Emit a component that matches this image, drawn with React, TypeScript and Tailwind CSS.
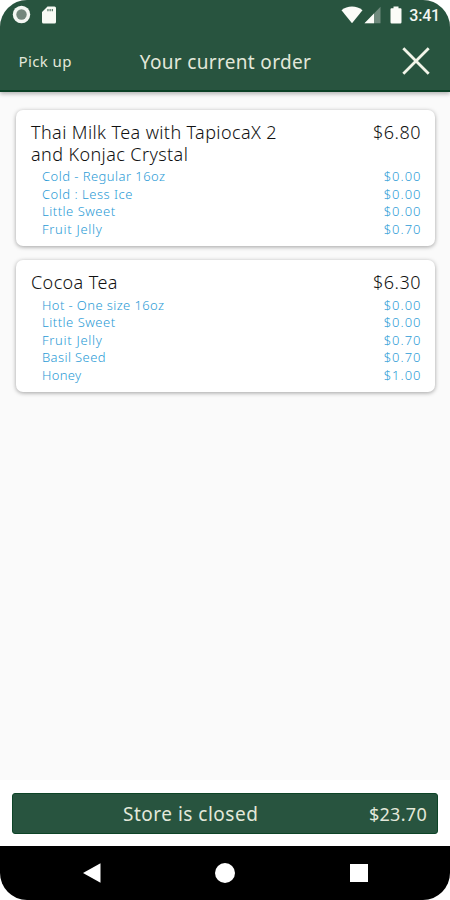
type Option = {
  name: string;
  price: string;
  nameClass: string;
};

type OrderItem = {
  title: string;
  price: string;
  options: Option[];
};

const ORDER: OrderItem[] = [
  {
    title: 'Thai Milk Tea with TapiocaX 2 and Konjac Crystal',
    price: '$6.80',
    options: [
      { name: 'Cold - Regular 16oz', price: '$0.00', nameClass: 'tracking-[0.45px]' },
      { name: 'Cold : Less Ice', price: '$0.00', nameClass: 'tracking-[0.5px]' },
      { name: 'Little Sweet', price: '$0.00', nameClass: 'tracking-[0.5px]' },
      { name: 'Fruit Jelly', price: '$0.70', nameClass: 'tracking-[0.7px]' },
    ],
  },
  {
    title: 'Cocoa Tea',
    price: '$6.30',
    options: [
      { name: 'Hot - One size 16oz', price: '$0.00', nameClass: 'tracking-[0.4px]' },
      { name: 'Little Sweet', price: '$0.00', nameClass: 'tracking-[0.5px]' },
      { name: 'Fruit Jelly', price: '$0.70', nameClass: 'tracking-[0.7px]' },
      { name: 'Basil Seed', price: '$0.70', nameClass: 'tracking-[0.4px]' },
      { name: 'Honey', price: '$1.00', nameClass: 'tracking-[0.3px]' },
    ],
  },
];

const StatusBar = () => (
  <div className="flex h-[29px] items-center justify-between pl-[12px] pr-[10px]">
    <div className="flex items-center gap-[11px]">
      <svg width="19" height="19" viewBox="0 0 19 19">
        <circle cx="9.5" cy="9.5" r="8.7" fill="#f4f7f3" />
        <circle cx="9.5" cy="9.5" r="5.2" fill="#74877d" />
      </svg>
      <svg width="15" height="18" viewBox="0 0 15 18">
        <path d="M5.5 0.5h7a1.5 1.5 0 0 1 1.5 1.5v14a1.5 1.5 0 0 1-1.5 1.5h-11A1.5 1.5 0 0 1 0 16V6z" fill="#f8faf5" />
        <path d="M5.3 3h1.3v2.2H5.3zM7.5 3h1.3v2.2H7.5zM9.7 3H11v2.2H9.7z" fill="#5f7d6e" />
      </svg>
    </div>
    <div className="flex items-center">
      <svg width="22" height="18" viewBox="0 0 22 18">
        <path d="M0.5 4.3C3.5 1.7 7 0.5 11 0.5s7.5 1.2 10.5 3.8L11 17.3z" fill="#fbfcf8" />
      </svg>
      <svg width="17" height="18" viewBox="0 0 17 18" className="ml-px">
        <path d="M16.5 0.8v16.5H0.5z" fill="#6f8a7d" />
        <path d="M10 7.5v9.8H0.5z" fill="#fbfcf8" />
      </svg>
      <svg width="12" height="18" viewBox="0 0 12 18" className="ml-[9px]">
        <path d="M3.5 0.5h5v1.8h2a1 1 0 0 1 1 1v13a1.2 1.2 0 0 1-1.2 1.2h-8.6A1.2 1.2 0 0 1 0.5 16.3v-13a1 1 0 0 1 1-1h2z" fill="#fbfcf8" />
      </svg>
      <span className="ml-[7px] mt-[2px] font-['Roboto',sans-serif] text-[16px] font-medium leading-none tracking-[-0.2px] text-[#f5f7f2]">3:41</span>
    </div>
  </div>
);

const Header = () => (
  <header className="relative h-[92px] shrink-0 border-b-2 border-[#0c4126] bg-[#28543f] shadow-[0_2px_4px_rgba(0,0,0,0.28)]">
    <StatusBar />
    <div className="grid h-[64px] grid-cols-[121px_1fr_121px] items-center font-normal text-[#e3e8da]">
      <span className="pl-[18.5px] pt-px text-[15px] tracking-[0.4px]">Pick up</span>
      <h1 className="whitespace-nowrap pl-px pt-[2px] text-center text-[19px] tracking-[0.33px]">Your current order</h1>
      <button className="ml-auto mr-[20px]" aria-label="Close">
        <svg width="28" height="28" viewBox="0 0 28 28" fill="none" stroke="#f3f5e9" strokeWidth="2.8">
          <path d="M1.3 1.3l25.4 25.4M26.7 1.3L1.3 26.7" />
        </svg>
      </button>
    </div>
  </header>
);

const OrderCard = ({ item }: { item: OrderItem }) => (
  <section className="rounded-[7px] bg-white pb-[8px] pl-[15px] pr-[15px] pt-[12px] shadow-[0_1px_4px_rgba(0,0,0,0.36)]">
    <div className="flex justify-between text-[18px] leading-[21.5px] text-[#111111]">
      <h2 className="w-[262px] tracking-[0.4px]">{item.title}</h2>
      <span className="-mr-px tracking-[0.5px]">{item.price}</span>
    </div>
    <ul className="mt-[3px] pl-[11px] text-[13px] leading-[17.5px] text-[#2b9bd6]">
      {item.options.map((option) => (
        <li key={option.name} className="flex justify-between">
          <span className={option.nameClass}>{option.name}</span>
          <span className="-mr-[1.5px] tracking-[1px]">{option.price}</span>
        </li>
      ))}
    </ul>
  </section>
);

const NavBar = () => (
  <nav className="flex h-[54px] shrink-0 items-center justify-between bg-black pl-[83px] pr-[82px]">
    <svg width="18" height="20" viewBox="0 0 18 20">
      <path d="M0 10L17.5 0.2v19.6z" fill="white" />
    </svg>
    <span className="mr-px h-[20px] w-[20px] rounded-full bg-white" />
    <span className="h-[18px] w-[18px] bg-white" />
  </nav>
);

export default function App() {
  return (
    <div className="h-[900px] w-[450px] bg-white">
      <div className="flex h-full flex-col overflow-hidden rounded-[27px] bg-[#fafafa] font-['Noto_Sans',sans-serif] font-light">
        <Header />
        <main className="flex flex-1 flex-col gap-[14px] pl-[16px] pr-[15px] pt-[18px]">
          {ORDER.map((item) => (
            <OrderCard key={item.price} item={item} />
          ))}
        </main>
        <footer className="h-[66px] shrink-0 bg-white pl-[12px] pr-[12px] pt-[13px]">
          <button className="flex h-[41px] w-full items-center justify-between rounded-[3px] border border-[#0d4427] bg-[#28543f] pl-[110px] pr-[10px] font-normal text-[#e3e8da]">
            <span className="pt-px text-[19px] tracking-[0.5px]">Store is closed</span>
            <span className="pt-px text-[18px] tracking-[0.3px]">$23.70</span>
          </button>
        </footer>
        <NavBar />
      </div>
    </div>
  );
}
